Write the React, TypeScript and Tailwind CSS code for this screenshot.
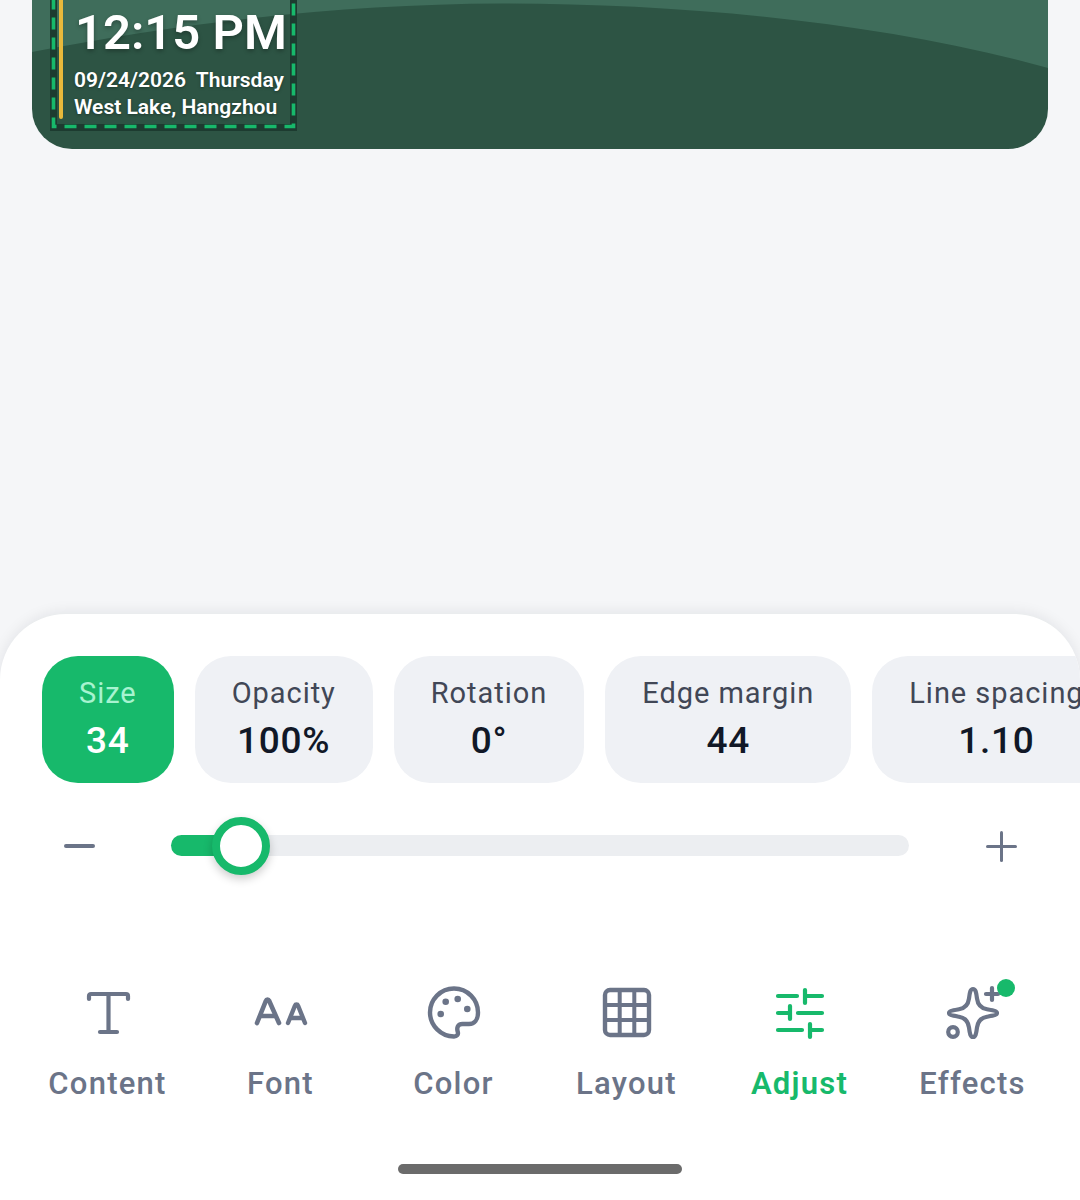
import { Fragment } from "react";

const tabs = [
  { label: "Size", value: "34", active: true },
  { label: "Opacity", value: "100%" },
  { label: "Rotation", value: "0°" },
  { label: "Edge margin", value: "44" },
  { label: "Line spacing", value: "1.10" },
];

function TextIcon() {
  return (
    <Fragment>
      <path d="M9 14v-3a2 2 0 0 1 2-2h35a2 2 0 0 1 2 2v3" />
      <path d="M28.500 9v38" />
      <path d="M20 47h17" />
    </Fragment>
  );
}

function FontIcon() {
  return (
    <Fragment>
      <path d="M4 38 13 15.500a1.600 1.600 0 0 1 3 0L26 38" strokeWidth="4.600" />
      <path d="M8 31h14" strokeWidth="4.600" />
      <path d="M35 38 42 20.500a1.600 1.600 0 0 1 3 0L52 38" strokeWidth="4.400" />
      <path d="M38 33h11" strokeWidth="4.400" />
    </Fragment>
  );
}

function PaletteIcon() {
  return (
    <Fragment>
      <path d="M28 3.500C14.500 3.500 4 14.500 4 27.500S15 51.500 28 51.500c3 0 4.500-2 3.800-4.500-1.200-3.500-.5-8 4.700-8H43c5.500 0 9-4.500 9-11.500C52 14.500 41.500 3.500 28 3.500Z" strokeWidth="4.400" />
      <circle cx="19.700" cy="16.700" r="3.300" fill="currentColor" stroke="none" />
      <circle cx="31.700" cy="14" r="3.300" fill="currentColor" stroke="none" />
      <circle cx="41.300" cy="24" r="3.300" fill="currentColor" stroke="none" />
      <circle cx="14.700" cy="29" r="3.300" fill="currentColor" stroke="none" />
    </Fragment>
  );
}

function GridIcon() {
  return (
    <Fragment>
      <rect x="6" y="5" width="44" height="45" rx="5" strokeWidth="4.400" />
      <path d="M20.700 5v45M35.300 5v45M6 20h44M6 35h44" strokeLinecap="butt" strokeWidth="4" />
    </Fragment>
  );
}

function SlidersIcon() {
  return (
    <Fragment>
      <path d="M6 11h19M33 5v13M33 11h17" />
      <path d="M6 28h12M18 21v13M26 28h24" />
      <path d="M6 45h24M38 39v13M38 45h12" />
    </Fragment>
  );
}

function SparkleIcon() {
  return (
    <Fragment>
      <path d="M28 4c2.500 0 3.200 3 4 9.500.8 6.500 4 9.700 10 10.800 6.500 1.200 10 1.700 10 3.700s-3.500 2.500-10 3.700c-6 1.100-9.200 4.300-10 10.800-.8 6.500-1.500 9.500-4 9.500s-3.200-3-4-9.500c-.8-6.500-4-9.700-10-10.800C7.500 30.500 4 30 4 28s3.500-2.500 10-3.700c6-1.100 9.200-4.300 10-10.800.8-6.500 1.500-9.500 4-9.500Z" />
      <path d="M41 9h12M47 3v12" />
      <circle cx="8" cy="47" r="4.800" />
    </Fragment>
  );
}

const navItems = [
  { label: "Content", icon: <TextIcon /> },
  { label: "Font", icon: <FontIcon /> },
  { label: "Color", icon: <PaletteIcon /> },
  { label: "Layout", icon: <GridIcon /> },
  { label: "Adjust", icon: <SlidersIcon />, active: true },
  { label: "Effects", icon: <SparkleIcon />, badge: true },
];

export default function App() {
  return (
    <div className="flex h-[1200px] flex-col overflow-hidden bg-[#f5f6f8] font-['Roboto',sans-serif]">
      <div className="px-8">
        <div className="relative h-[149px] overflow-hidden rounded-b-[40px] bg-[#2d5444]">
          <svg className="absolute inset-0 h-full w-full" viewBox="0 0 1016 149" preserveAspectRatio="none">
            <path d="M0 52C140 25 300 4 470 3.500C650 3.500 850 22 1016 68V0H0Z" fill="#3f6d5b" />
          </svg>
          <div className="absolute top-[-20px] left-[18px] h-[151px] w-[247px] text-white">
            <svg className="absolute inset-0 h-full w-full" viewBox="0 0 247 151" fill="none">
              <rect x="3.500" y="3.500" width="240" height="144" stroke="#1d3b30" strokeWidth="7" />
              <rect x="3.500" y="3.500" width="240" height="143" stroke="#17b96b" strokeWidth="3.600" strokeDasharray="12 8" />
            </svg>
            <div className="absolute top-0 left-[9px] h-[139px] w-1 rounded-full bg-[#e9b93b]" />
            <div className="absolute top-[23px] left-[25px] text-[49px] leading-[60px] font-semibold whitespace-nowrap [text-shadow:0_2px_4px_rgba(0,0,0,0.3)]">
              12:15 PM
            </div>
            <div className="absolute top-[87px] left-[24px] text-[21px] leading-[27px] font-semibold whitespace-pre [text-shadow:0_1px_3px_rgba(0,0,0,0.35)]">
              <div>09/24/2026  Thursday</div>
              <div>West Lake, Hangzhou</div>
            </div>
          </div>
        </div>
      </div>

      <div className="mt-[465px] flex min-h-0 flex-1 flex-col overflow-hidden rounded-t-[66px] bg-white shadow-[0_-2px_14px_rgba(17,24,39,0.08)]">
        <div className="flex gap-[21px] pt-[42px] pl-[42px]">
          {tabs.map((tab) => (
            <div
              key={tab.label}
              className={`flex h-[127px] shrink-0 flex-col items-center rounded-[36px] px-[37px] pt-[19px] ${
                tab.active ? "bg-[#17b96b]" : "bg-[#eff1f5]"
              }`}
            >
              <span
                className={`text-[29px] leading-[36px] font-[450] tracking-[0.033em] whitespace-nowrap ${
                  tab.active ? "text-[#a7f3d0]" : "text-[#414756]"
                }`}
              >
                {tab.label}
              </span>
              <span
                className={`mt-[7px] text-[37px] leading-[46px] font-medium tracking-[0.02em] ${
                  tab.active ? "text-white" : "text-[#111827]"
                }`}
              >
                {tab.value}
              </span>
            </div>
          ))}
        </div>

        <div className="mt-[34px] flex h-[58px] items-start">
          <div className="flex h-full w-[159px] items-center justify-center">
            <div className="h-1 w-[31px] rounded-full bg-[#6b7488]" />
          </div>
          <div className="relative mt-[18px] ml-[12px] h-[21px] w-[738px] rounded-full bg-[#eceef1]">
            <div className="h-full w-[70px] rounded-full bg-[#17b96b]" />
            <div className="absolute top-[-18px] left-[41px] h-[58px] w-[58px] rounded-full border-[8px] border-[#17b96b] bg-white shadow-[0_4px_10px_rgba(0,0,0,0.2)]" />
          </div>
          <div className="relative mt-[14px] ml-[77px] h-[31px] w-[31px]">
            <div className="absolute top-[14px] left-0 h-[3px] w-[31px] rounded-full bg-[#6b7488]" />
            <div className="absolute top-0 left-[14px] h-[31px] w-[3px] rounded-full bg-[#6b7488]" />
          </div>
        </div>

        <div className="mt-[110px] flex pl-[21px]">
          {navItems.map((item) => (
            <div
              key={item.label}
              className={`relative flex w-[173px] flex-col items-center ${
                item.active ? "text-[#17b96b]" : "text-[#6b7488]"
              }`}
            >
              <svg
                width="56"
                height="56"
                viewBox="0 0 56 56"
                fill="none"
                stroke="currentColor"
                strokeWidth="4.200"
                strokeLinecap="round"
                strokeLinejoin="round"
              >
                {item.icon}
              </svg>
              {item.badge ? (
                <span className="absolute top-[-6px] left-[111px] h-[18px] w-[18px] rounded-full bg-[#17b96b]" />
              ) : null}
              <span
                className={`mt-[23px] text-[31px] leading-[40px] tracking-[0.04em] ${
                  item.active ? "font-semibold" : "font-medium"
                }`}
              >
                {item.label}
              </span>
            </div>
          ))}
        </div>

        <div className="mt-[60px] flex justify-center">
          <div className="h-[10px] w-[284px] rounded-full bg-[#6b6b6b]" />
        </div>
      </div>
    </div>
  );
}
